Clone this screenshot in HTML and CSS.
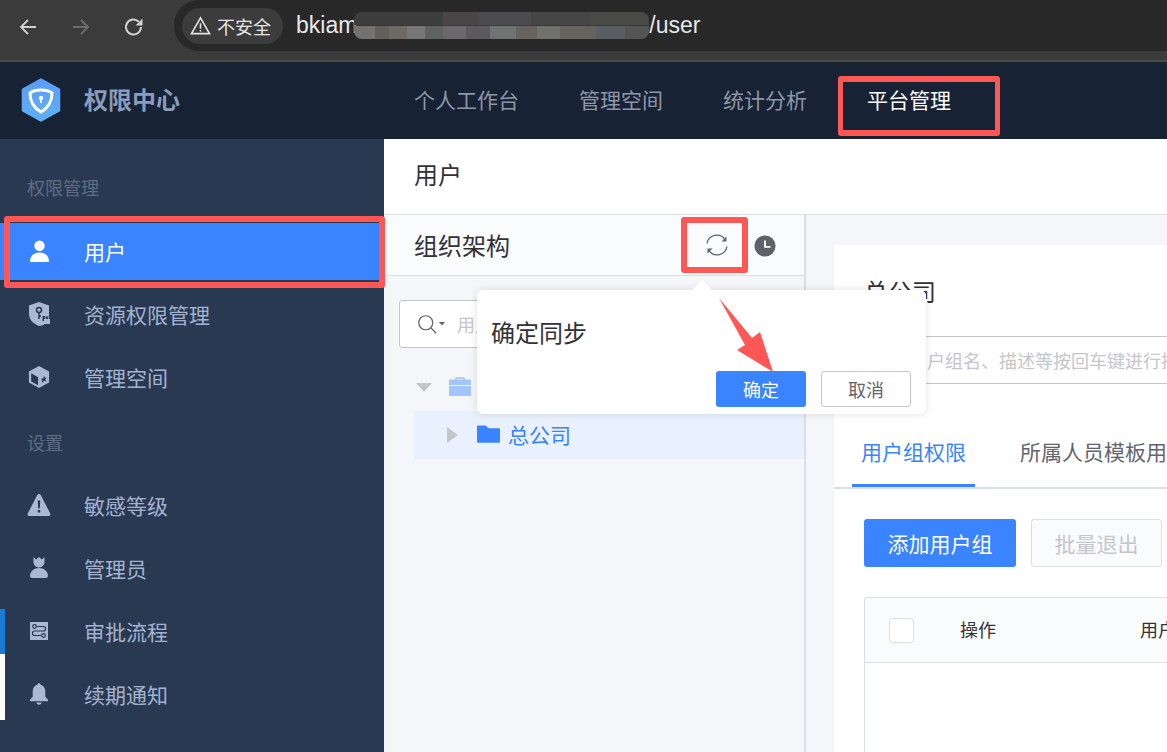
FILE: index.html
```html
<!DOCTYPE html>
<html lang="zh">
<head>
<meta charset="utf-8">
<title>权限中心</title>
<link rel="stylesheet" href="styles.css">
</head>
<body>
<div class="chrome">
  <div class="chrome-btns">
    <svg class="cicon" viewBox="0 0 20 20"><path d="M18 10H3M10 3l-7 7 7 7" fill="none" stroke="#d2d2d2" stroke-width="1.8"/></svg>
    <svg class="cicon" viewBox="0 0 20 20"><path d="M2 10h15M10 3l7 7-7 7" fill="none" stroke="#6d6d6d" stroke-width="1.8"/></svg>
    <svg class="cicon" viewBox="0 0 20 20"><path d="M17 10a7.500 7.500 0 1 1-2.200-5.300" fill="none" stroke="#d2d2d2" stroke-width="2"/><path d="M18.500 1.500v7h-7z" fill="#d2d2d2"/></svg>
  </div>
  <div class="omni">
    <div class="secure">
      <svg class="warn" viewBox="0 0 22 20"><path d="M11 2 1.500 18.500h19z" fill="none" stroke="#e4e4e4" stroke-width="1.700"/><path d="M10.200 7.500h1.600v6h-1.600zM10.200 14.700h1.600v1.600h-1.600z" fill="#e4e4e4"/></svg>
      <span>不安全</span>
    </div>
    <span class="url">bkiam</span><div class="mosaic"></div><span class="url">/user</span>
  </div>
</div>

<header class="topbar">
  <div class="brand">
    <svg class="logo" viewBox="0 0 40 44">
      <defs><linearGradient id="lg" x1="0" y1="0" x2="0" y2="1"><stop offset="0" stop-color="#5b9bf8"/><stop offset="1" stop-color="#5fb0f5"/></linearGradient></defs>
      <path d="M20 1.500 38 11.500V32.500L20 42.500 2 32.500V11.500z" fill="url(#lg)" stroke="url(#lg)" stroke-width="2.500" stroke-linejoin="round"/>
      <path d="M20 12c5 0 9 1.500 11 3 0 8-4 15-11 19-7-4-11-11-11-19 2-1.500 6-3 11-3z" fill="none" stroke="#fff" stroke-width="3"/>
      <circle cx="20" cy="20" r="2.200" fill="#fff"/><path d="M19 21h2v4h-2z" fill="#fff"/>
    </svg>
    <span class="brand-name">权限中心</span>
  </div>
  <nav class="topnav">
    <a class="nav-item">个人工作台</a>
    <a class="nav-item">管理空间</a>
    <a class="nav-item">统计分析</a>
    <a class="nav-item active">平台管理</a>
  </nav>
</header>

<div class="body">
  <aside class="sidebar">
    <div class="group">权限管理</div>
    <div class="item selected">
      <span class="ic"><svg class="i-user" viewBox="0 0 20 23"><circle cx="10" cy="6" r="5.500" fill="#fff"/><path d="M0 23c0-6.500 4-10 10-10s10 3.500 10 10z" fill="#fff"/></svg></span>
      <span>用户</span>
    </div>
    <div class="item">
      <span class="ic"><svg class="i-shield" viewBox="0 0 22 24"><path d="M11 0 21 3.500V14H14.500V19H16V23L11 24C4 21 1 17 1 11V3.500z" fill="#aab8d2"/><circle cx="11" cy="8" r="2.500" fill="none" stroke="#2a3952" stroke-width="1.500"/><path d="M11 10.500V17M11 14h2" stroke="#2a3952" stroke-width="1.500"/><rect x="16" y="17" width="6" height="5" fill="#aab8d2"/><path d="M17.300 17v-1.500a1.700 1.700 0 0 1 3.400 0V17" fill="none" stroke="#aab8d2"/></svg></span>
      <span>资源权限管理</span>
    </div>
    <div class="item">
      <span class="ic"><svg class="i-box" viewBox="0 0 24 24"><path d="M12 0 23 6V18L12 24 1 18V6z" fill="#aab8d2"/><path d="M3.500 8 11 12.200V21L3.500 16.800z" fill="#2a3952"/><path d="M17.500 10.500l1 2.500 2-.5-1.500 2 1 2.500-2.500-1-2.500 2.500.5-3-1.500-1.500 2.500-.5z" fill="#2a3952"/></svg></span>
      <span>管理空间</span>
    </div>
    <div class="group second">设置</div>
    <div class="item">
      <span class="ic"><svg class="i-warn" viewBox="0 0 24 22"><path d="M12 0c1 0 1.500 .5 2 1.500L23 19c.7 1 .5 3-1 3H2c-1.500 0-1.700-2-1-3L10 1.500C10.500 .5 11 0 12 0z" fill="#aab8d2"/><path d="M10.800 6.500h2.400l-.4 8h-1.600zM10.800 16h2.400v2.400h-2.400z" fill="#2a3952"/></svg></span>
      <span>敏感等级</span>
    </div>
    <div class="item">
      <span class="ic"><svg class="i-admin" viewBox="0 0 18 21"><path d="M3.500 0 6 2.500 9 0l3 2.500L14.500 0v5c0 3-2.500 5.500-5.500 5.500S3.500 8 3.500 5z" fill="#aab8d2"/><path d="M0 19c0-4.500 4-8 9-8s9 3.500 9 8c0 1-1 2-2 2H2c-1 0-2-1-2-2z" fill="#aab8d2"/></svg></span>
      <span>管理员</span>
    </div>
    <div class="item">
      <span class="ic"><svg class="i-flow" viewBox="0 0 20 20"><rect width="20" height="20" fill="#aab8d2"/><circle cx="5" cy="5" r="2" fill="none" stroke="#2a3952" stroke-width="1.300"/><circle cx="15" cy="15" r="2" fill="none" stroke="#2a3952" stroke-width="1.300"/><path d="M7 5h8c3 0 3 5 0 5H5c-3 0-3 5 0 5h8" fill="none" stroke="#2a3952" stroke-width="1.300"/></svg></span>
      <span>审批流程</span>
    </div>
    <div class="item">
      <span class="ic"><svg class="i-bell" viewBox="0 0 20 24"><path d="M10 0c1 0 1.500 .6 1.500 1.500C15 2.500 17 5.500 17 9v6l3 3.500V20H0v-1.500L3 15V9c0-3.500 2-6.500 5.500-7.500C8.500 .6 9 0 10 0z" fill="#aab8d2"/><path d="M7 21.500h6c-.5 1.500-1.500 2.500-3 2.500s-2.500-1-3-2.500z" fill="#aab8d2"/></svg></span>
      <span>续期通知</span>
    </div>
    <div class="edge"></div>
  </aside>

  <main class="main">
    <div class="title">用户</div>
    <div class="content">
      <section class="org">
        <div class="org-head">
          <span class="org-title">组织架构</span>
          <div class="org-tools">
            <svg class="sync" viewBox="0 0 24 24"><path d="M2 10.500A10 10 0 0 1 20 6.300M22 13.500A10 10 0 0 1 4 17.700" fill="none" stroke="#63656e" stroke-width="1.300"/><path d="M21.500 3.500v5h-5zM2.500 20.500v-5h5z" fill="#63656e"/></svg>
            <svg class="clock" viewBox="0 0 24 24"><circle cx="12" cy="12" r="11.500" fill="#5f6068"/><path d="M12 6v7h6" fill="none" stroke="#fff" stroke-width="2"/></svg>
          </div>
        </div>
        <div class="org-body">
          <div class="search">
            <svg class="search-ic" viewBox="0 0 32 24"><circle cx="10" cy="10" r="8" fill="none" stroke="#63656e" stroke-width="1.400"/><path d="M16 16l6 6" stroke="#63656e" stroke-width="1.400"/><path d="M25 9h7l-3.500 4z" fill="#63656e"/></svg>
            <span class="ph">用户</span>
          </div>
          <div class="tree-root">
            <span class="caret-down"></span>
            <svg class="case" viewBox="0 0 22 19"><path d="M7 3V1h8v2" fill="none" stroke="#a3c5fd" stroke-width="1.500"/><path d="M0 4c0-1 1-1.500 1.500-1.500h19c.5 0 1.500 .5 1.500 1.500v4H0zM0 9h22v9c0 .5-.5 1-1 1H1c-.5 0-1-.5-1-1z" fill="#a3c5fd"/></svg>
          </div>
          <div class="tree-node">
            <span class="caret-right"></span>
            <svg class="folder" viewBox="0 0 24 18"><path d="M0 1c0-.5.5-1 1-1h8l3 3h11c.5 0 1 .5 1 1v13c0 .5-.5 1-1 1H1c-.5 0-1-.5-1-1z" fill="#3a84ff"/></svg>
            <span class="node-name">总公司</span>
          </div>
        </div>
      </section>

      <section class="detail">
        <div class="card">
          <div class="card-name">总公司</div>
          <div class="filter">用户组名、描述等按回车键进行搜索</div>
          <div class="tabs">
            <span class="tab on">用户组权限</span>
            <span class="tab">所属人员模板用户组权限</span>
          </div>
          <div class="actions">
            <span class="btn primary">添加用户组</span>
            <span class="btn off">批量退出</span>
          </div>
          <div class="table">
            <div class="thead">
              <span class="check"></span>
              <span class="th op">操作</span>
              <span class="th">用户组名</span>
            </div>
          </div>
        </div>
      </section>
    </div>
  </main>
</div>

<div class="popover">
  <span class="pop-arrow"></span>
  <div class="pop-text">确定同步</div>
  <div class="pop-btns">
    <span class="pbtn ok">确定</span>
    <span class="pbtn cancel">取消</span>
  </div>
</div>

<div class="mark mark-nav"></div>
<div class="mark mark-item"></div>
<div class="mark mark-sync"></div>
<svg class="red-arrow" viewBox="0 0 60 76"><path d="M1 0 34 40 42 34 55 74 19 52 27 47Z" fill="#ff5656"/></svg>
</body>
</html>
```
FILE: styles.css
```css
* { box-sizing: border-box; }
html, body { margin: 0; height: 100%; overflow: hidden; }
body {
  width: 1167px; height: 752px; position: relative;
  font-family: "Noto Sans CJK SC", "Noto Sans", sans-serif;
  display: flex; flex-direction: column; background: #fff;
}

/* browser chrome */
.chrome {
  height: 62px; flex: none; display: flex; align-items: flex-start;
  background: #3b3b3b; border-bottom: 2px solid #4b4b48; overflow: hidden;
}
.chrome-btns { display: flex; gap: 33px; padding: 17px 0 0 18px; width: 174px; flex: none; }
.cicon { width: 20px; height: 20px; }
.omni {
  flex: 1; height: 51px; background: #282828; border-radius: 25px 0 0 25px;
  display: flex; align-items: center; padding: 0 0 0 8px; margin-top: 0;
}
.secure {
  height: 36px; width: 101px; background: #3c3c3c; border-radius: 18px; flex: none;
  display: flex; align-items: center; gap: 6px; padding-left: 8px;
  color: #e6e6e6; font-size: 18px; margin-right: 13px;
}
.warn { width: 21px; height: 19px; }
.url { color: #e6e8ea; font-size: 23px; font-family: "Liberation Sans", sans-serif; }
.mosaic {
  width: 295px; height: 27px; flex: none; border-radius: 8px; margin-left: -3px; margin-right: 0;
  background:
    linear-gradient(90deg, #747270 0 7%, #62605d 7% 12%, #6d6a66 12% 18%, #777 18% 24%, #5e6261 24% 30%, #6a686c 30% 38%, #5c5a5e 38% 46%, #6f7372 46% 55%, #66635e 55% 62%, #70706c 62% 70%, #66635e 70% 82%, #5a5e62 82% 92%, #555 92% 100%) 0 100% / 100% 50% no-repeat,
    linear-gradient(90deg, #3e3e3e 0 30%, #4a4547 30% 42%, #4a4c50 42% 60%, #464646 60% 80%, #4a4a46 80% 100%) 0 0 / 100% 50% no-repeat;
}

/* header */
.topbar { height: 77px; flex: none; background: #182235; display: flex; align-items: center; padding-bottom: 4px; }
.brand { width: 414px; flex: none; display: flex; align-items: center; padding-left: 21px; gap: 23px; }
.logo { width: 40px; height: 44px; margin-top: 2px; }
.brand-name { color: #8a9cbc; font-size: 24px; font-weight: 700; }
.topnav { display: flex; gap: 60px; }
.nav-item { color: #8e97a8; font-size: 21px; line-height: 28px; }
.nav-item.active { color: #fff; }

/* layout */
.body { flex: 1; display: flex; min-height: 0; }
.sidebar { width: 384px; flex: none; background: #2a3952; padding-top: 30px; position: relative; }
.group { color: #5f6c84; font-size: 18px; line-height: 36px; padding-left: 27px; margin-bottom: 18px; }
.group.second { margin-top: 16px; margin-bottom: 13px; }
.item {
  height: 63px; display: flex; align-items: center; color: #a3b3cf; font-size: 21px;
  padding-left: 27px; gap: 33px;
}
.item.selected { background: #3a84ff; color: #fff; height: 57px; margin-bottom: 2px; padding-bottom: 2px; }
.ic { width: 24px; flex: none; display: flex; justify-content: center; }
.i-user { width: 19px; height: 22px; }
.i-shield { width: 22px; height: 24px; }
.i-box { width: 22px; height: 24px; }
.i-warn { width: 24px; height: 22px; }
.i-admin { width: 18px; height: 21px; }
.i-flow { width: 18px; height: 18px; }
.i-bell { width: 18px; height: 22px; }
.edge {
  position: absolute; left: 0; top: 470px; width: 5px; height: 111px;
  background: linear-gradient(#1b7ad6 0 45px, #fff 45px 100%);
}

.main { flex: 1; display: flex; flex-direction: column; min-width: 0; }
.title {
  height: 76px; flex: none; background: #fff; border-bottom: 1px solid #dcdee5;
  font-size: 24px; color: #313238; line-height: 70px; padding-left: 30px;
}
.content { flex: 1; display: flex; min-height: 0; background: #f5f6fa; }

.org { width: 422px; flex: none; border-right: 2px solid #dcdee5; display: flex; flex-direction: column; }
.org-head {
  height: 61px; flex: none; display: flex; align-items: center; justify-content: space-between;
  padding: 0 28px 0 30px; background: #fafbfd; border-bottom: 1px solid #dcdee5;
}
.org-title { font-size: 24px; color: #313238; margin-top: -2px; }
.org-tools { display: flex; align-items: center; gap: 25px; }
.sync { width: 24px; height: 24px; }
.clock { width: 22px; height: 22px; margin-top: 2px; }
.org-body { padding: 24px 0 0 15px; }
.search {
  height: 48px; width: 300px; background: #fff; border: 1px solid #c4c6cc; border-radius: 3px;
  display: flex; align-items: center; padding-left: 17px; gap: 12px;
}
.search-ic { width: 28px; height: 21px; }
.ph { color: #c4c6cc; font-size: 18px; }
.tree-root { height: 63px; display: flex; align-items: center; padding: 16px 0 0 17px; gap: 17px; }
.caret-down { border: 8px solid transparent; border-top: 9px solid #c4c6cc; border-bottom: 0; }
.case { width: 22px; height: 19px; margin-top: -2px; }
.tree-node {
  height: 48px; margin-left: 15px; background: #e9f1fe; display: flex; align-items: center;
  padding-left: 33px;
}
.caret-right { border: 8px solid transparent; border-left: 11px solid #c4c6cc; border-right: 0; margin-right: 19px; }
.folder { width: 23px; height: 18px; margin-top: -2px; margin-right: 9px; }
.node-name { color: #3a84ff; font-size: 21px; margin-top: -2px; margin-left: -1px; }

.detail { flex: 1; padding: 30px 0 0 28px; min-width: 0; }
.card { background: #fff; height: 100%; padding: 0 0 0 30px; overflow: hidden; }
.card-name { font-size: 24px; color: #313238; line-height: 30px; padding-top: 31px; height: 91px; }
.filter {
  width: 400px; height: 48px; border: 1px solid #c4c6cc; border-right: 0; border-radius: 3px 0 0 3px;
  color: #c4c6cc; font-size: 18px; line-height: 46px; white-space: nowrap; overflow: hidden; padding-left: 44px;
}
.tabs {
  margin: 0 0 0 -30px; padding-left: 18px; height: 105px; display: flex; align-items: flex-end; gap: 45px;
  border-bottom: 2px solid #dcdee5; white-space: nowrap; overflow: hidden;
}
.tab { font-size: 21px; color: #63656e; height: 53px; line-height: 34px; margin-bottom: 0; flex: none; }
.tab.on { color: #3a84ff; border-bottom: 3px solid #3a84ff; padding: 0 9px; }
.actions { display: flex; gap: 15px; padding-top: 30px; }
.btn { height: 48px; border-radius: 3px; font-size: 21px; line-height: 48px; text-align: center; }
.primary { width: 152px; background: #3a84ff; color: #fff; }
.off { width: 131px; background: #fafbfd; color: #c4c6cc; border: 1px solid #dcdee5; line-height: 46px; }
.table {
  margin-top: 30px; height: 200px; border: 1px solid #dcdee5; border-right: 0; border-bottom: 0;
  border-radius: 3px 0 0 0; overflow: hidden;
}
.thead {
  height: 65px; background: #fafbfd; border-bottom: 1px solid #dcdee5; display: flex; align-items: center;
  padding-left: 24px; white-space: nowrap;
}
.check { width: 25px; height: 25px; flex: none; border: 1px solid #dcdee5; border-radius: 3px; background: #fff; margin-right: 46px; }
.th { font-size: 18px; color: #313238; flex: none; margin-top: -2px; }
.op { width: 180px; }

/* popover */
.popover {
  position: absolute; left: 477px; top: 290px; width: 449px; height: 124px;
  background: #fff; border-radius: 6px; box-shadow: 0 0 8px rgba(0, 0, 0, .12);
  padding: 25px 15px 7px 14px;
}
.pop-arrow {
  position: absolute; left: 215px; top: -10px; width: 0; height: 0;
  border: 10px solid transparent; border-top: 0; border-bottom: 10px solid #fff;
}
.pop-text { font-size: 24px; color: #313238; line-height: 34px; }
.pop-btns { display: flex; justify-content: flex-end; gap: 15px; margin-top: 22px; }
.pbtn { width: 90px; height: 36px; border-radius: 3px; font-size: 18px; line-height: 36px; text-align: center; }
.ok { background: #3a84ff; color: #fff; }
.cancel { background: #fff; color: #63656e; border: 1px solid #c4c6cc; line-height: 34px; }

/* annotations */
.mark { position: absolute; border: 6px solid #ff5656; border-radius: 3px; }
.mark-nav { left: 838px; top: 76px; width: 162px; height: 60px; border-width: 6px 5px; }
.mark-item { left: 4px; top: 216px; width: 381px; height: 72px; }
.mark-sync { left: 681px; top: 217px; width: 67px; height: 56px; }
.red-arrow { position: absolute; left: 718px; top: 298px; width: 60px; height: 76px; }
```
